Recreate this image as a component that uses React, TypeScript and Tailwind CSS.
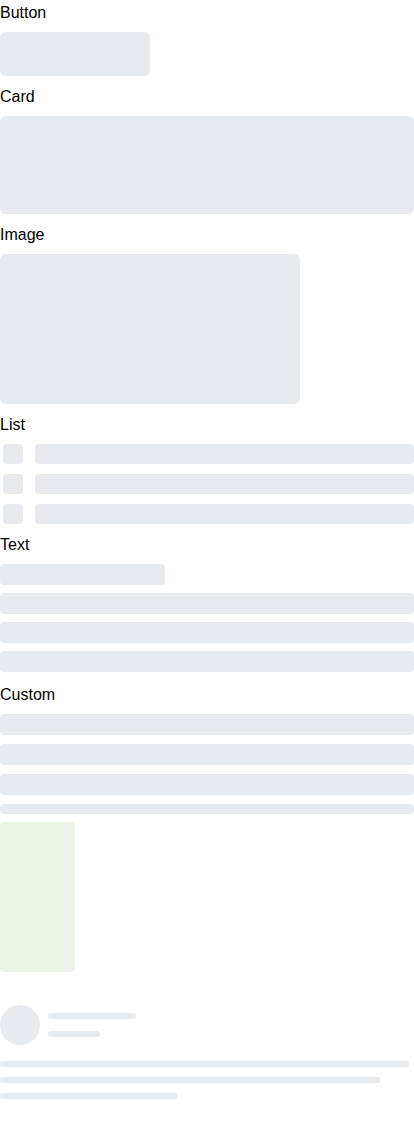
const gray = "bg-[#e7ebef]";

function Label({ children }: { children: string }) {
  return <div className="h-6 text-base leading-[26px] text-black">{children}</div>;
}

export default function App() {
  return (
    <div className="w-[414px] bg-white font-['Liberation_Sans',Arial,sans-serif]">
      {/* BUTTON */}
      <Label>Button</Label>
      <div className={`mt-2 h-[44px] w-[150px] rounded-md ${gray}`} />

      {/* CARD */}
      <div className="mt-2">
        <Label>Card</Label>
      </div>
      <div className={`mt-2 h-[98px] w-full rounded-md ${gray}`} />

      {/* IMAGE */}
      <div className="mt-2">
        <Label>Image</Label>
      </div>
      <div className={`mt-2 h-[150px] w-[300px] rounded-md ${gray}`} />

      {/* LIST */}
      <div className="mt-2">
        <Label>List</Label>
      </div>
      <div className="mt-2 flex flex-col gap-[10px]">
        {[0, 1, 2].map((i) => (
          <div key={i} className="flex items-center gap-3">
            <div className={`ml-[3px] h-5 w-5 rounded ${gray}`} />
            <div className={`h-5 flex-1 rounded-sm ${gray}`} />
          </div>
        ))}
      </div>

      {/* TEXT */}
      <div className="mt-2">
        <Label>Text</Label>
      </div>
      <div className="mt-2 flex flex-col gap-2">
        <div className={`h-[21px] w-[165px] rounded ${gray}`} />
        <div className={`h-[21px] w-full rounded ${gray}`} />
        <div className={`h-[21px] w-full rounded ${gray}`} />
        <div className={`h-[21px] w-full rounded ${gray}`} />
      </div>

      {/* CUSTOM */}
      <div className="mt-[10px]">
        <Label>Custom</Label>
      </div>
      <div className="mt-2 flex flex-col gap-[9px]">
        <div className={`h-[21px] w-full rounded ${gray}`} />
        <div className={`h-[21px] w-full rounded ${gray}`} />
        <div className={`h-[21px] w-full rounded ${gray}`} />
        <div className={`h-[10px] w-full rounded-sm ${gray}`} />
      </div>
      <div className="mt-2 h-[150px] w-[75px] rounded-sm bg-[#e9f4e7]" />

      {/* PROFILE */}
      <div className="mt-[33px] flex items-center gap-2">
        <div className={`h-10 w-10 rounded-full ${gray}`} />
        <div className="flex flex-col gap-3">
          <div className={`h-[6px] w-[88px] rounded-full ${gray}`} />
          <div className={`h-[6px] w-[52px] rounded-full ${gray}`} />
        </div>
      </div>
      <div className="mt-4 flex flex-col gap-[10px]">
        <div className={`h-[6px] w-[410px] rounded-full ${gray}`} />
        <div className={`h-[6px] w-[380px] rounded-full ${gray}`} />
        <div className={`h-[6px] w-[178px] rounded-full ${gray}`} />
      </div>
      <div className="h-[31px]" />
    </div>
  );
}
